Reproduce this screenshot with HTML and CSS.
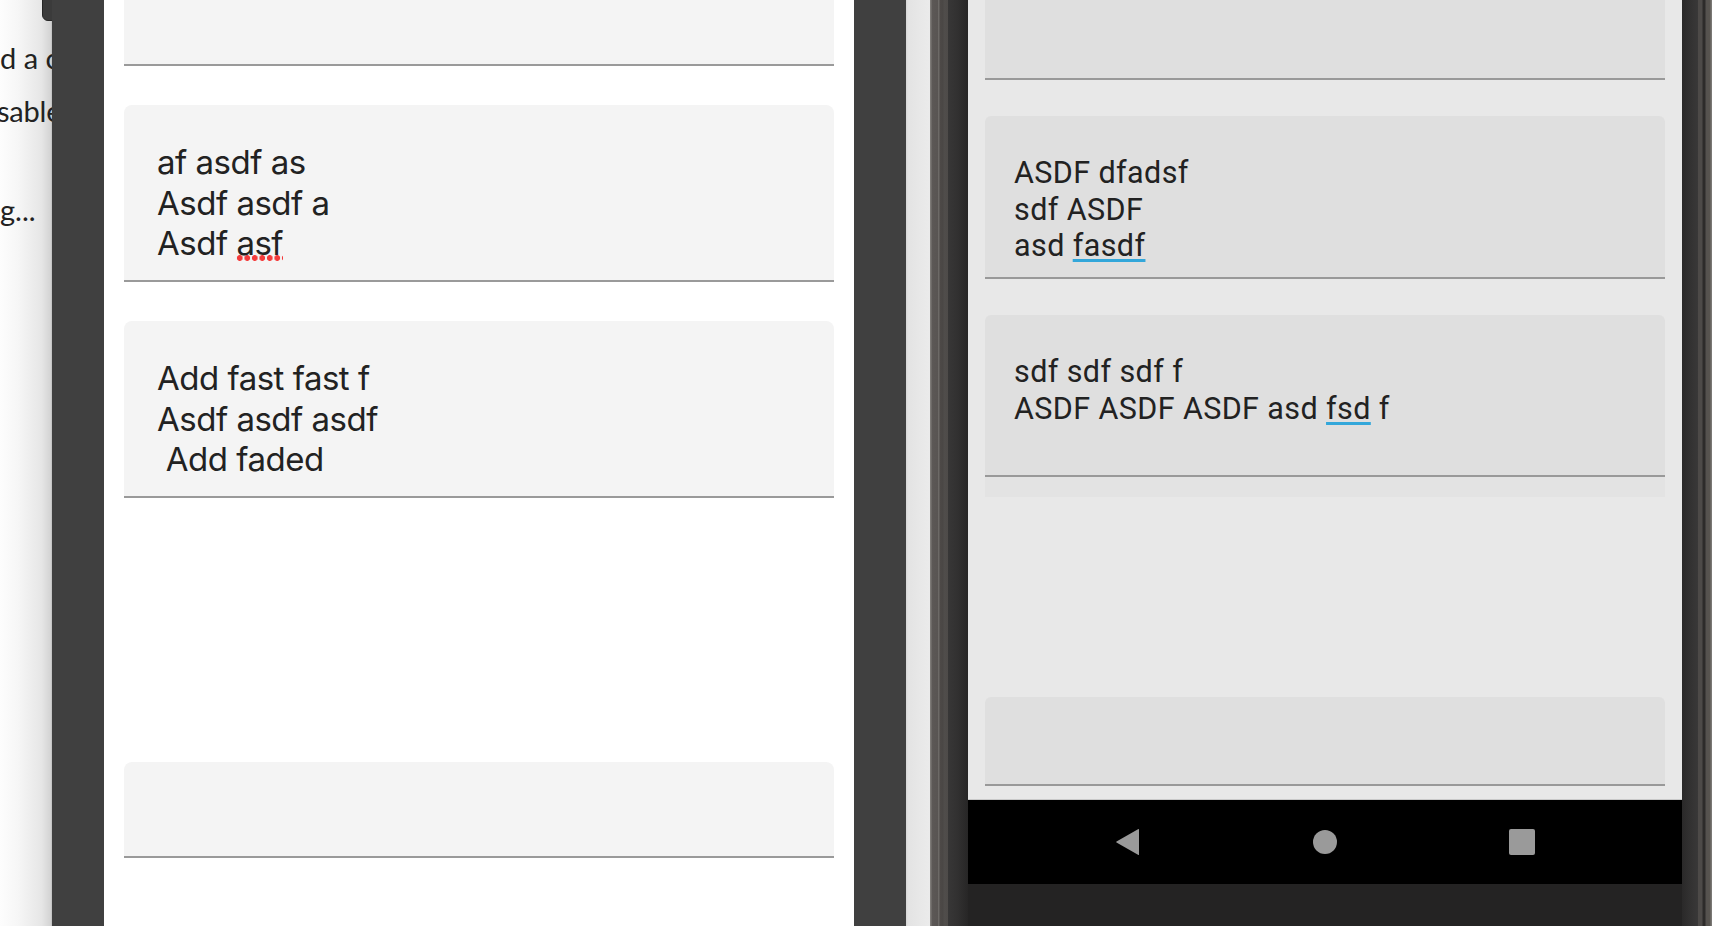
FILE: index.html
```html
<!DOCTYPE html>
<html lang="en">
<head>
<meta charset="utf-8">
<title>Editors</title>
<link rel="stylesheet" href="styles.css">
</head>
<body>
<div class="side-panel">
  <div class="side-button"></div>
  <div class="side-text">
    <div class="side-line">d a cl</div>
    <div class="side-line shift">sable</div>
    <div class="side-line gap">g...</div>
  </div>
</div>
<div class="gutter"></div>
<main class="ios-screen">
  <div class="ios-list">
    <div class="ios-card first"></div>
    <div class="ios-card">
      <div class="ios-text">af asdf as<br>Asdf asdf a<br>Asdf <span class="misspelled">asf</span></div>
    </div>
    <div class="ios-card">
      <div class="ios-text">Add fast fast f<br>Asdf asdf asdf<br>&nbsp;Add faded</div>
    </div>
    <div class="ios-card short"></div>
  </div>
</main>
<div class="gutter"></div>
<div class="desk-strip"></div>
<div class="phone">
  <div class="bezel-left"></div>
  <div class="android">
    <div class="android-content">
      <div class="and-list">
        <div class="and-card first"></div>
        <div class="and-card">
          <div class="and-text">ASDF dfadsf<br>sdf ASDF<br>asd <span class="suggest">fasdf</span></div>
        </div>
        <div class="and-card with-tail">
          <div class="and-text">sdf sdf sdf f<br>ASDF ASDF ASDF asd <span class="suggest">fsd</span> f</div>
        </div>
        <div class="and-tail"></div>
        <div class="and-card short"></div>
      </div>
    </div>
    <nav class="nav-bar">
      <svg class="nav-icon" width="26" height="28" viewBox="0 0 26 28"><path d="M24 1.5 L24 26.5 Q24 27.5 23 26.8 L1.5 14.6 Q0.8 14 1.5 13.4 L23 1.2 Q24 0.6 24 1.5 Z" fill="#9a9a9a"/></svg>
      <span class="nav-circle"></span>
      <span class="nav-square"></span>
    </nav>
    <div class="chin"></div>
  </div>
  <div class="bezel-right"></div>
</div>
</body>
</html>
```
FILE: styles.css
```css
html, body {
  margin: 0;
  padding: 0;
}
body {
  width: 1712px;
  height: 926px;
  overflow: hidden;
  display: flex;
  background: #404040;
}

/* left desktop panel (clipped) */
.side-panel {
  position: relative;
  width: 52px;
  flex: none;
  overflow: hidden;
  background: linear-gradient(to right, #fdfdfd 0, #f6f6f6 35%, #e6e6e6 80%, #d4d4d4 97%, #bdbdbd 100%);
}
.side-button {
  position: absolute;
  left: 42px;
  top: -2px;
  width: 16px;
  height: 23px;
  background: #3b3b3b;
  border: 1px solid #262626;
  border-radius: 0 0 0 6px;
  box-sizing: border-box;
}
.side-text {
  padding-top: 35px;
  font-family: Lato, "Liberation Sans", sans-serif;
  font-size: 29px;
  line-height: 45px;
  color: #222;
  white-space: nowrap;
}
.side-line.shift { margin-left: -3px; margin-top: 8px; letter-spacing: -0.2px; }
.side-line.gap { margin-top: 54px; }

.gutter {
  width: 52px;
  flex: none;
  background: #404040;
}

/* iOS-like screen */
.ios-screen {
  width: 750px;
  flex: none;
  background: #ffffff;
  padding: 0 20px;
  box-sizing: border-box;
  overflow: hidden;
}
.ios-list {
  margin-top: -111px;
  display: flex;
  flex-direction: column;
  gap: 39px;
}
.ios-card {
  height: 177px;
  box-sizing: border-box;
  background: #f4f4f4;
  border-bottom: 2px solid #9a9a9a;
  border-radius: 8px 8px 0 0;
  padding: 37px 0 0 33px;
}
.ios-card.short {
  height: 96px;
  margin-top: 225px;
}
.ios-text {
  font-family: Inter, "Noto Sans", sans-serif;
  font-size: 33px;
  letter-spacing: -0.5px;
  line-height: 40.5px;
  color: #222;
  white-space: pre;
}
.misspelled {
  background-image: radial-gradient(circle at center, #f43b3b 0, #f43b3b 2.6px, rgba(244,59,59,0) 3.2px);
  background-repeat: repeat-x;
  background-size: 7.5px 10px;
  background-position: 0 100%;
}

.desk-strip {
  width: 24px;
  flex: none;
  background: linear-gradient(to right, #d6d6d6 0, #e3e3e3 2px, #e8e8e8 60%, #ebebeb 100%);
}

/* Android phone */
.phone {
  width: 782px;
  flex: none;
  display: flex;
}
.bezel-left {
  width: 38px;
  flex: none;
  background: linear-gradient(to right,
    #7d7a77 0, #7d7a77 1px, #5c5856 2px, #585452 8px, #6c6966 8px, #6c6966 9px,
    #4d4947 10px, #4a4745 13px, #504d4b 14px, #4e4b49 18px,
    #383737 18px, #313030 28px, #272626 38px);
}
.bezel-right {
  width: 30px;
  flex: none;
  background: linear-gradient(to right,
    #2a2929 0, #343333 10px, #393838 16px, #4d4a48 16px, #4d4a48 20px,
    #2d2b2a 21px, #2d2b2a 23px, #55524f 24px, #58544f 28px, #7a7875 29px, #7a7875 30px);
}
.android {
  width: 714px;
  flex: none;
  display: flex;
  flex-direction: column;
}
.android-content {
  height: 799px;
  flex: none;
  background: #e8e8e8;
  padding: 0 17px;
  overflow: hidden;
  border-bottom: 1px solid #c9c9c9;
}
.and-list {
  margin-top: -83px;
  display: flex;
  flex-direction: column;
  gap: 36px;
}
.and-card {
  height: 163px;
  box-sizing: border-box;
  background: #dfdfdf;
  border-bottom: 2px solid #999;
  border-radius: 6px 6px 0 0;
  padding: 39px 0 0 29px;
}
.and-card.with-tail { height: 162px; }
.and-tail {
  height: 20px;
  margin-top: -36px;
  background: #e3e3e3;
}
.and-card.short {
  height: 89px;
  margin-top: 164px;
}
.and-text {
  font-family: Roboto, "Noto Sans", sans-serif;
  font-size: 30.5px;
  letter-spacing: 0.4px;
  line-height: 36.5px;
  color: #222;
  white-space: pre;
}
.suggest {
  text-decoration: underline;
  text-decoration-color: #33a7da;
  text-decoration-thickness: 3px;
  text-underline-offset: 3px;
}
.nav-bar {
  height: 84px;
  flex: none;
  background: #000;
  display: flex;
  align-items: center;
  justify-content: center;
  gap: 172px;
}
.nav-icon { display: block; }
.nav-circle {
  width: 24px;
  height: 24px;
  border-radius: 50%;
  background: #9a9a9a;
}
.nav-square {
  width: 26px;
  height: 26px;
  border-radius: 2px;
  background: #9a9a9a;
}
.chin {
  flex: 1;
  background: #242323;
}
```
